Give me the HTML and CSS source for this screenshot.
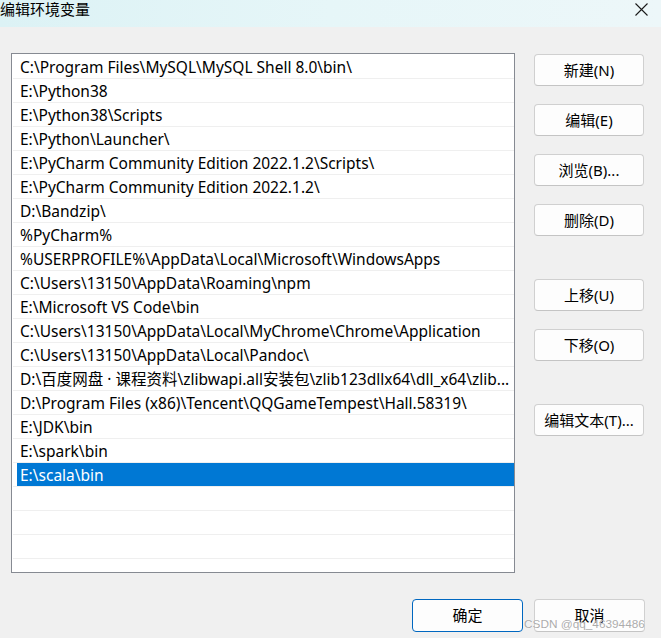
FILE: index.html
```html
<!DOCTYPE html>
<html lang="zh-CN">
<head>
<meta charset="utf-8">
<title>编辑环境变量</title>
<link rel="stylesheet" href="styles.css">
</head>
<body>
<div class="window">
  <div class="titlebar">
    <span class="title">编辑环境变量</span>
    <svg class="close" width="13" height="13" viewBox="0 0 13 13"><path d="M0.5 0.5 L12.5 12.5 M12.5 0.5 L0.5 12.5" stroke="#1a1a1a" stroke-width="1.1" fill="none"/></svg>
  </div>
  <div class="main">
    <div class="list">
      <div class="row"><div class="cell">C:\Program Files\MySQL\MySQL Shell 8.0\bin\</div></div>
      <div class="row"><div class="cell">E:\Python38</div></div>
      <div class="row"><div class="cell">E:\Python38\Scripts</div></div>
      <div class="row"><div class="cell">E:\Python\Launcher\</div></div>
      <div class="row"><div class="cell">E:\PyCharm Community Edition 2022.1.2\Scripts\</div></div>
      <div class="row"><div class="cell">E:\PyCharm Community Edition 2022.1.2\</div></div>
      <div class="row"><div class="cell">D:\Bandzip\</div></div>
      <div class="row"><div class="cell">%PyCharm%</div></div>
      <div class="row"><div class="cell">%USERPROFILE%\AppData\Local\Microsoft\WindowsApps</div></div>
      <div class="row"><div class="cell">C:\Users\13150\AppData\Roaming\npm</div></div>
      <div class="row"><div class="cell">E:\Microsoft VS Code\bin</div></div>
      <div class="row"><div class="cell">C:\Users\13150\AppData\Local\MyChrome\Chrome\Application</div></div>
      <div class="row"><div class="cell">C:\Users\13150\AppData\Local\Pandoc\</div></div>
      <div class="row"><div class="cell">D:\百度网盘 · 课程资料\zlibwapi.all安装包\zlib123dllx64\dll_x64\zlib...</div></div>
      <div class="row"><div class="cell">D:\Program Files (x86)\Tencent\QQGameTempest\Hall.58319\</div></div>
      <div class="row"><div class="cell">E:\JDK\bin</div></div>
      <div class="row"><div class="cell">E:\spark\bin</div></div>
      <div class="row selected"><div class="cell">E:\scala\bin</div></div>
      <div class="row"><div class="cell"></div></div>
      <div class="row"><div class="cell"></div></div>
      <div class="row"><div class="cell"></div></div>
    </div>
    <div class="side">
      <button class="btn">新建(N)</button>
      <button class="btn">编辑(E)</button>
      <button class="btn">浏览(B)...</button>
      <button class="btn">删除(D)</button>
      <button class="btn group">上移(U)</button>
      <button class="btn">下移(O)</button>
      <button class="btn group">编辑文本(T)...</button>
    </div>
  </div>
  <div class="footer">
    <button class="btn primary">确定</button>
    <button class="btn">取消</button>
  </div>
  <div class="watermark">CSDN @qq_46394486</div>
</div>
</body>
</html>
```
FILE: styles.css
```css
html, body {
  margin: 0;
  padding: 0;
}
body {
  background: #f0f0f0;
  font-family: "Noto Sans", "Noto Sans CJK SC", sans-serif;
  color: #000;
}
.window {
  position: relative;
  width: 661px;
  height: 638px;
  overflow: hidden;
  background: #f0f0f0;
}
.titlebar {
  height: 27px;
  display: flex;
  justify-content: space-between;
  align-items: flex-start;
  background: linear-gradient(90deg, #dcf2f5 0%, #e6f6f8 50%, #edf7f9 100%);
}
.title {
  font-size: 15px;
  line-height: 19px;
  padding-top: 0;
}
.close {
  margin: 3px 13px 0 0;
}
.main {
  display: flex;
  gap: 19px;
  padding: 26px 0 0 11px;
}
.list {
  box-sizing: border-box;
  width: 504px;
  height: 520px;
  border: 1px solid #868a92;
  background: #fff;
  padding: 1px 0 0 1px;
  overflow: hidden;
}
.row {
  border-bottom: 1px solid #efefef;
  height: 23px;
}
.cell {
  box-sizing: border-box;
  margin-left: 4px;
  padding: 2px 0 0 3px;
  height: 23px;
  line-height: 21px;
  font-size: 15.5px;
  white-space: nowrap;
  overflow: hidden;
}
.row.selected .cell {
  background: #0078d4;
  color: #fff;
}
.side {
  display: flex;
  flex-direction: column;
  gap: 18px;
  padding-top: 1px;
}
.btn {
  box-sizing: border-box;
  width: 110px;
  height: 32px;
  border: 1px solid #d0d0d0;
  border-bottom-color: #c4c4c4;
  border-radius: 4px;
  background: #fdfdfd;
  font-family: "Noto Sans", "Noto Sans CJK SC", sans-serif;
  font-size: 15px;
  color: #000;
  padding: 0 0 2px 0;
}
.btn.group {
  margin-top: 25px;
}
.footer {
  display: flex;
  justify-content: flex-end;
  gap: 11px;
  padding: 26px 16px 0 0;
}
.footer .btn {
  width: 111px;
  height: 33px;
}
.btn.primary {
  border: 1px solid #0067c0;
}
.watermark {
  position: absolute;
  left: 524px;
  top: 617px;
  font-family: "Liberation Sans", sans-serif;
  font-size: 11.8px;
  color: rgba(150, 150, 150, 0.8);
  text-shadow: 0 0 1px #fff;
}
```
